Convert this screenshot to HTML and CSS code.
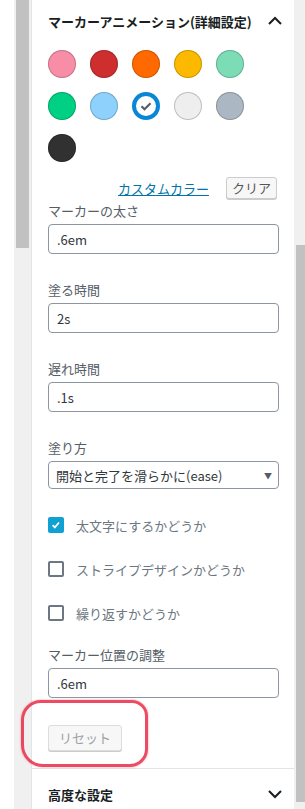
FILE: index.html
```html
<!DOCTYPE html>
<html lang="ja">
<head>
  <meta charset="utf-8"/>
  <title>マーカーアニメーション</title>
  <link rel="stylesheet" href="styles.css">
</head>
<body>
  <div class="frame">
    <div class="gutter-left">
      <div class="strip"><div class="thumb"></div></div>
    </div>

    <div class="panel">
      <div class="panel-head">
        <span>マーカーアニメーション(詳細設定)</span>
        <svg class="chev" width="24" height="24" viewBox="0 0 24 24"><path d="M6 15l6-6 6 6" fill="none" stroke="#191e23" stroke-width="2"/></svg>
      </div>

      <div class="swatches">
        <span class="swatch" style="background:#f78da7"></span>
        <span class="swatch" style="background:#cf2e2e"></span>
        <span class="swatch" style="background:#ff6900"></span>
        <span class="swatch" style="background:#fcb900"></span>
        <span class="swatch" style="background:#7bdcb5"></span>
        <span class="swatch" style="background:#00d084"></span>
        <span class="swatch" style="background:#8ed1fc"></span>
        <span class="swatch selected">
          <svg width="16" height="16" viewBox="0 0 16 16"><path d="M3.5 8.2l3 3 6-6" fill="none" stroke="#555d66" stroke-width="2.2"/></svg>
        </span>
        <span class="swatch" style="background:#eeeeee"></span>
        <span class="swatch" style="background:#abb8c3"></span>
        <span class="swatch" style="background:#313131"></span>
      </div>

      <div class="custom-row">
        <a href="#" class="custom-link">カスタムカラー</a>
        <button type="button" class="btn">クリア</button>
      </div>

      <div class="field first">
        <label>マーカーの太さ</label>
        <input type="text" value=".6em">
      </div>

      <div class="field">
        <label>塗る時間</label>
        <input type="text" value="2s">
      </div>

      <div class="field">
        <label>遅れ時間</label>
        <input type="text" value=".1s">
      </div>

      <div class="field">
        <label>塗り方</label>
        <div class="select">
          <span>開始と完了を滑らかに(ease)</span>
          <span class="arrow">▼</span>
        </div>
      </div>

      <div class="checks">
        <div class="check-row"><span class="box on"><svg width="16" height="16" viewBox="0 0 16 16"><path d="M3.5 8.3l3 2.9 5.5-6.5" fill="none" stroke="#fff" stroke-width="2.4"/></svg></span>太文字にするかどうか</div>
        <div class="check-row"><span class="box"></span>ストライプデザインかどうか</div>
        <div class="check-row"><span class="box"></span>繰り返すかどうか</div>
      </div>

      <div class="field pos">
        <label>マーカー位置の調整</label>
        <input type="text" value=".6em">
      </div>

      <div class="reset-wrap">
        <button type="button" class="btn reset">リセット</button>
        <div class="highlight"></div>
      </div>

      <div class="panel-foot">
        <span>高度な設定</span>
        <svg class="chev" width="24" height="24" viewBox="0 0 24 24"><path d="M6 9l6 6 6-6" fill="none" stroke="#191e23" stroke-width="2"/></svg>
      </div>
    </div>

    <div class="gutter-right"><div class="thumb"></div></div>
  </div>
</body>
</html>
```

FILE: styles.css
```css
body {
  margin: 0;
  font-family: "Noto Sans CJK JP", "Noto Sans", sans-serif;
  font-size: 13px;
  color: #555d66;
  background: #fff;
}

.frame {
  display: flex;
  height: 809px;
  overflow: hidden;
}

.gutter-left {
  width: 32px;
  padding-left: 14px;
  box-sizing: border-box;
  flex-shrink: 0;
}

.gutter-left .strip {
  height: 100%;
  background: #f0f0f0;
  border-right: 1px solid #e2e4e7;
  padding-left: 2px;
}

.gutter-left .thumb {
  width: 13px;
  height: 248px;
  background: #c1c1c1;
}

.gutter-right {
  width: 11px;
  flex-shrink: 0;
  background: #f0f0f0;
  padding: 245px 0 0 2px;
  box-sizing: border-box;
}

.gutter-right .thumb {
  height: 557px;
  background: #c1c1c1;
}

.panel {
  width: 262px;
  flex-shrink: 0;
  padding: 0 15px 0 16px;
  box-sizing: border-box;
}

.panel-head, .panel-foot {
  display: flex;
  align-items: center;
  justify-content: space-between;
  font-weight: bold;
  color: #191e23;
  font-size: 13px;
}

.panel-head {
  height: 42px;
}

.panel-head .chev, .panel-foot .chev {
  margin-right: -8px;
}

.swatches {
  display: grid;
  grid-template-columns: repeat(5, 28px);
  gap: 14px;
  margin-top: 8px;
}

.swatch {
  width: 28px;
  height: 28px;
  border-radius: 50%;
  box-shadow: inset 0 0 0 1px rgba(0,0,0,0.2);
  display: flex;
  align-items: center;
  justify-content: center;
}

.swatch.selected {
  background: #fff;
  box-shadow: inset 0 0 0 4px #0a86d6;
}

.custom-row {
  display: flex;
  justify-content: flex-end;
  align-items: center;
  gap: 17px;
  margin-top: 15px;
  padding-right: 2px;
  height: 22px;
}

.custom-link {
  color: #0073aa;
  text-decoration: underline;
}

.btn {
  font-family: inherit;
  font-size: 13px;
  background: #f7f7f7;
  border: 1px solid #ccc;
  border-radius: 3px;
  box-shadow: 0 1px 0 #ccc;
  color: #555;
  height: 22px;
  padding: 0 5px;
  line-height: 20px;
}

.field label {
  display: block;
  line-height: 18px;
  margin-bottom: 4px;
}

.field {
  margin-top: 27px;
}

.field.first {
  margin-top: 3px;
}

.field input {
  display: block;
  width: 100%;
  height: 30px;
  box-sizing: border-box;
  border: 1px solid #8d96a0;
  border-radius: 4px;
  padding: 0 8px;
  font-family: inherit;
  font-size: 13px;
  color: #32373c;
}

.select {
  height: 28px;
  border: 1px solid #8d96a0;
  border-radius: 4px;
  box-sizing: border-box;
  display: flex;
  align-items: center;
  justify-content: space-between;
  padding: 0 6px 0 7px;
  color: #32373c;
}

.select .arrow {
  font-size: 8px;
  color: #555d66;
}

.checks {
  margin-top: 28px;
  display: flex;
  flex-direction: column;
  gap: 28px;
}

.check-row {
  display: flex;
  align-items: center;
  gap: 12px;
  height: 16px;
  color: #6c7781;
}

.box {
  width: 16px;
  height: 16px;
  box-sizing: border-box;
  border: 2px solid #6c7781;
  border-radius: 2px;
  display: flex;
  align-items: center;
  justify-content: center;
}

.box.on {
  background: #11a0d2;
  border-color: #11a0d2;
}

.field.pos {
  margin-top: 25px;
}

.reset-wrap {
  position: relative;
  margin-top: 27px;
  padding-bottom: 17px;
  border-bottom: 1px solid #e2e4e7;
  margin-left: -16px;
  margin-right: -15px;
  padding-left: 16px;
}

.btn.reset {
  height: 26px;
  padding: 0 10px;
  color: #9ca1a6;
  border-color: #ddd;
}

.highlight {
  position: absolute;
  left: -11px;
  top: -25px;
  width: 121px;
  height: 61px;
  border: 3px solid rgba(232, 30, 60, 0.8);
  border-radius: 20px 16px 18px 22px;
  box-shadow: 0 0 2px rgba(232, 30, 60, 0.5);
}

.panel-foot {
  height: 50px;
}
```
